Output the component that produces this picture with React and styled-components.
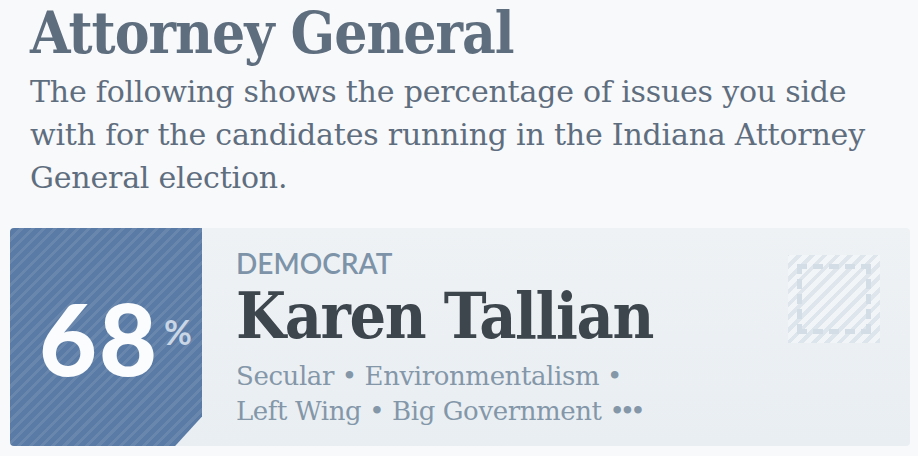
import React from "react";
import styled, { createGlobalStyle } from "styled-components";

const Global = createGlobalStyle`
  html, body { margin: 0; padding: 0; background: #f8f9fa; }
  body { font-family: "DejaVu Serif", serif; }
`;

const Page = styled.div`
  width: 918px;
  height: 456px;
  overflow: hidden;
  box-sizing: border-box;
  padding: 0 8px 0 10px;
  display: flex;
  flex-direction: column;
`;

const Intro = styled.div`
  padding-left: 20px;
  max-width: 850px;
`;

const Title = styled.h1`
  margin: 0;
  font-family: "DejaVu Serif Condensed", "DejaVu Serif", serif;
  font-stretch: condensed;
  font-weight: 700;
  font-size: 58px;
  line-height: 66px;
  color: #5f6e7f;
  letter-spacing: -1px;
`;

const Lead = styled.p`
  margin: 4px 0 0;
  font-family: "DejaVu Serif", serif;
  font-weight: 400;
  font-size: 30px;
  line-height: 43px;
  color: #5f6e7f;
  letter-spacing: -0.2px;
`;

const Card = styled.div`
  margin-top: 29px;
  height: 218px;
  display: flex;
  border-radius: 4px;
  background: linear-gradient(180deg, #eef2f5 0%, #e9eef2 100%);
`;

const Score = styled.div`
  flex: 0 0 192px;
  display: flex;
  align-items: center;
  justify-content: flex-start;
  border-radius: 4px 0 0 4px;
  background-color: #5a7ba5;
  background-image: repeating-linear-gradient(
    -45deg,
    rgba(255, 255, 255, 0.09) 0 3px,
    rgba(255, 255, 255, 0) 3px 8px
  );
  clip-path: polygon(0 0, 100% 0, 100% 86.5%, 86% 100%, 0 100%);
  padding-left: 29px;
  box-sizing: border-box;
`;

const Number = styled.span`
  font-family: Lato, sans-serif;
  font-weight: 900;
  font-size: 100px;
  line-height: 1;
  color: #fbfcfd;
  letter-spacing: 2px;
`;

const Percent = styled.span`
  font-family: Lato, sans-serif;
  font-weight: 700;
  font-size: 34px;
  line-height: 1;
  color: #c9d6e6;
  align-self: flex-start;
  margin-top: 87px;
  margin-left: 5px;
`;

const Info = styled.div`
  flex: 1;
  display: flex;
  flex-direction: column;
  padding: 20px 0 0 34px;
`;

const Party = styled.div`
  font-family: Lato, sans-serif;
  font-weight: 600;
  font-size: 28px;
  line-height: 30px;
  color: #7d93a8;
`;

const Name = styled.div`
  font-family: "DejaVu Serif Condensed", "DejaVu Serif", serif;
  font-stretch: condensed;
  font-weight: 700;
  font-size: 64px;
  line-height: 76px;
  color: #3d454d;
  letter-spacing: -1.4px;
`;

const Tags = styled.div`
  margin-top: 5px;
  font-family: "DejaVu Serif", serif;
  font-size: 26px;
  line-height: 35px;
  color: #8497a9;
  letter-spacing: -0.4px;
`;

const Dots = styled.span`
  letter-spacing: -5px;
`;

const Thumb = styled.div`
  flex: 0 0 92px;
  height: 88px;
  margin: 27px 30px 0 0;
  box-sizing: border-box;
  padding: 9px 9px;
  background-image: repeating-linear-gradient(
    -45deg,
    rgba(208, 219, 229, 0.5) 0 4px,
    rgba(255, 255, 255, 0.3) 4px 9px
  );
  display: flex;
`;

const ThumbFrame = styled.div`
  flex: 1;
  border: 5px dashed #d3dde6;
`;

export default function App() {
  return (
    <>
      <Global />
      <Page>
        <Intro>
          <Title>Attorney General</Title>
          <Lead>
            The following shows the percentage of issues you side with for the
            candidates running in the Indiana Attorney General election.
          </Lead>
        </Intro>
        <Card>
          <Score>
            <Number>68</Number>
            <Percent>%</Percent>
          </Score>
          <Info>
            <Party>DEMOCRAT</Party>
            <Name>Karen Tallian</Name>
            <Tags>
              Secular • Environmentalism •
              <br />
              Left Wing • Big Government <Dots>•••</Dots>
            </Tags>
          </Info>
          <Thumb>
            <ThumbFrame />
          </Thumb>
        </Card>
      </Page>
    </>
  );
}
